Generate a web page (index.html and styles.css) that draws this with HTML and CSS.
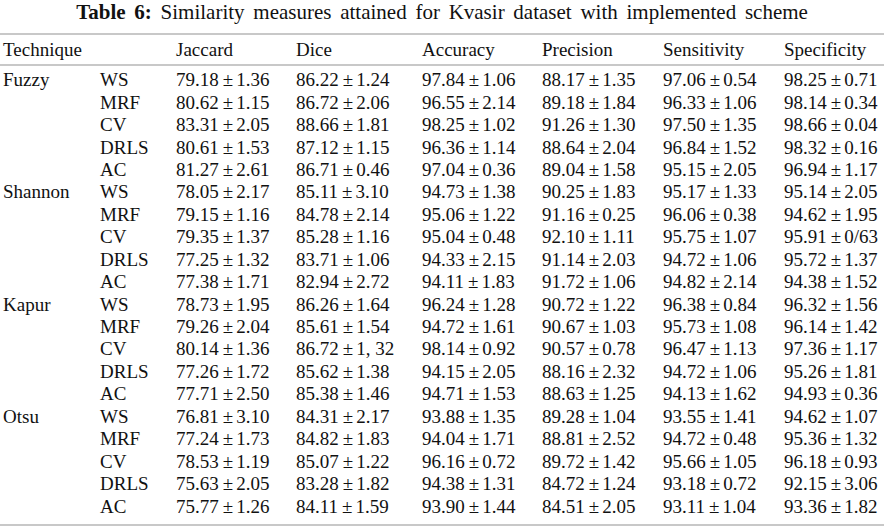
FILE: index.html
```html
<!DOCTYPE html>
<html>
<head>
<meta charset="utf-8">
<link rel="stylesheet" href="styles.css">
</head>
<body>
<div class="wrap">
<div class="title"><b>Table 6:</b> Similarity measures attained for Kvasir dataset with implemented scheme</div>
<table class="tbl">
<thead>
<tr><th>Technique</th><th></th><th>Jaccard</th><th>Dice</th><th>Accuracy</th><th>Precision</th><th>Sensitivity</th><th>Specificity</th></tr>
</thead>
<tbody>
<tr><td>Fuzzy</td><td>WS</td><td>79.18<span class="pm">±</span>1.36</td><td>86.22<span class="pm">±</span>1.24</td><td>97.84<span class="pm">±</span>1.06</td><td>88.17<span class="pm">±</span>1.35</td><td>97.06<span class="pm">±</span>0.54</td><td>98.25<span class="pm">±</span>0.71</td></tr>
<tr><td></td><td>MRF</td><td>80.62<span class="pm">±</span>1.15</td><td>86.72<span class="pm">±</span>2.06</td><td>96.55<span class="pm">±</span>2.14</td><td>89.18<span class="pm">±</span>1.84</td><td>96.33<span class="pm">±</span>1.06</td><td>98.14<span class="pm">±</span>0.34</td></tr>
<tr><td></td><td>CV</td><td>83.31<span class="pm">±</span>2.05</td><td>88.66<span class="pm">±</span>1.81</td><td>98.25<span class="pm">±</span>1.02</td><td>91.26<span class="pm">±</span>1.30</td><td>97.50<span class="pm">±</span>1.35</td><td>98.66<span class="pm">±</span>0.04</td></tr>
<tr><td></td><td>DRLS</td><td>80.61<span class="pm">±</span>1.53</td><td>87.12<span class="pm">±</span>1.15</td><td>96.36<span class="pm">±</span>1.14</td><td>88.64<span class="pm">±</span>2.04</td><td>96.84<span class="pm">±</span>1.52</td><td>98.32<span class="pm">±</span>0.16</td></tr>
<tr><td></td><td>AC</td><td>81.27<span class="pm">±</span>2.61</td><td>86.71<span class="pm">±</span>0.46</td><td>97.04<span class="pm">±</span>0.36</td><td>89.04<span class="pm">±</span>1.58</td><td>95.15<span class="pm">±</span>2.05</td><td>96.94<span class="pm">±</span>1.17</td></tr>
<tr><td>Shannon</td><td>WS</td><td>78.05<span class="pm">±</span>2.17</td><td>85.11<span class="pm">±</span>3.10</td><td>94.73<span class="pm">±</span>1.38</td><td>90.25<span class="pm">±</span>1.83</td><td>95.17<span class="pm">±</span>1.33</td><td>95.14<span class="pm">±</span>2.05</td></tr>
<tr><td></td><td>MRF</td><td>79.15<span class="pm">±</span>1.16</td><td>84.78<span class="pm">±</span>2.14</td><td>95.06<span class="pm">±</span>1.22</td><td>91.16<span class="pm">±</span>0.25</td><td>96.06<span class="pm">±</span>0.38</td><td>94.62<span class="pm">±</span>1.95</td></tr>
<tr><td></td><td>CV</td><td>79.35<span class="pm">±</span>1.37</td><td>85.28<span class="pm">±</span>1.16</td><td>95.04<span class="pm">±</span>0.48</td><td>92.10<span class="pm">±</span>1.11</td><td>95.75<span class="pm">±</span>1.07</td><td>95.91<span class="pm">±</span>0/63</td></tr>
<tr><td></td><td>DRLS</td><td>77.25<span class="pm">±</span>1.32</td><td>83.71<span class="pm">±</span>1.06</td><td>94.33<span class="pm">±</span>2.15</td><td>91.14<span class="pm">±</span>2.03</td><td>94.72<span class="pm">±</span>1.06</td><td>95.72<span class="pm">±</span>1.37</td></tr>
<tr><td></td><td>AC</td><td>77.38<span class="pm">±</span>1.71</td><td>82.94<span class="pm">±</span>2.72</td><td>94.11<span class="pm">±</span>1.83</td><td>91.72<span class="pm">±</span>1.06</td><td>94.82<span class="pm">±</span>2.14</td><td>94.38<span class="pm">±</span>1.52</td></tr>
<tr><td>Kapur</td><td>WS</td><td>78.73<span class="pm">±</span>1.95</td><td>86.26<span class="pm">±</span>1.64</td><td>96.24<span class="pm">±</span>1.28</td><td>90.72<span class="pm">±</span>1.22</td><td>96.38<span class="pm">±</span>0.84</td><td>96.32<span class="pm">±</span>1.56</td></tr>
<tr><td></td><td>MRF</td><td>79.26<span class="pm">±</span>2.04</td><td>85.61<span class="pm">±</span>1.54</td><td>94.72<span class="pm">±</span>1.61</td><td>90.67<span class="pm">±</span>1.03</td><td>95.73<span class="pm">±</span>1.08</td><td>96.14<span class="pm">±</span>1.42</td></tr>
<tr><td></td><td>CV</td><td>80.14<span class="pm">±</span>1.36</td><td>86.72<span class="pm">±</span>1, 32</td><td>98.14<span class="pm">±</span>0.92</td><td>90.57<span class="pm">±</span>0.78</td><td>96.47<span class="pm">±</span>1.13</td><td>97.36<span class="pm">±</span>1.17</td></tr>
<tr><td></td><td>DRLS</td><td>77.26<span class="pm">±</span>1.72</td><td>85.62<span class="pm">±</span>1.38</td><td>94.15<span class="pm">±</span>2.05</td><td>88.16<span class="pm">±</span>2.32</td><td>94.72<span class="pm">±</span>1.06</td><td>95.26<span class="pm">±</span>1.81</td></tr>
<tr><td></td><td>AC</td><td>77.71<span class="pm">±</span>2.50</td><td>85.38<span class="pm">±</span>1.46</td><td>94.71<span class="pm">±</span>1.53</td><td>88.63<span class="pm">±</span>1.25</td><td>94.13<span class="pm">±</span>1.62</td><td>94.93<span class="pm">±</span>0.36</td></tr>
<tr><td>Otsu</td><td>WS</td><td>76.81<span class="pm">±</span>3.10</td><td>84.31<span class="pm">±</span>2.17</td><td>93.88<span class="pm">±</span>1.35</td><td>89.28<span class="pm">±</span>1.04</td><td>93.55<span class="pm">±</span>1.41</td><td>94.62<span class="pm">±</span>1.07</td></tr>
<tr><td></td><td>MRF</td><td>77.24<span class="pm">±</span>1.73</td><td>84.82<span class="pm">±</span>1.83</td><td>94.04<span class="pm">±</span>1.71</td><td>88.81<span class="pm">±</span>2.52</td><td>94.72<span class="pm">±</span>0.48</td><td>95.36<span class="pm">±</span>1.32</td></tr>
<tr><td></td><td>CV</td><td>78.53<span class="pm">±</span>1.19</td><td>85.07<span class="pm">±</span>1.22</td><td>96.16<span class="pm">±</span>0.72</td><td>89.72<span class="pm">±</span>1.42</td><td>95.66<span class="pm">±</span>1.05</td><td>96.18<span class="pm">±</span>0.93</td></tr>
<tr><td></td><td>DRLS</td><td>75.63<span class="pm">±</span>2.05</td><td>83.28<span class="pm">±</span>1.82</td><td>94.38<span class="pm">±</span>1.31</td><td>84.72<span class="pm">±</span>1.24</td><td>93.18<span class="pm">±</span>0.72</td><td>92.15<span class="pm">±</span>3.06</td></tr>
<tr><td></td><td>AC</td><td>75.77<span class="pm">±</span>1.26</td><td>84.11<span class="pm">±</span>1.59</td><td>93.90<span class="pm">±</span>1.44</td><td>84.51<span class="pm">±</span>2.05</td><td>93.11<span class="pm">±</span>1.04</td><td>93.36<span class="pm">±</span>1.82</td></tr>
</tbody>
</table>
</div>
</body>
</html>
```
FILE: styles.css
```css
html, body {
  margin: 0;
  padding: 0;
  background: #fff;
}
body {
  font-family: "Liberation Serif", "Times New Roman", serif;
  color: #111;
  width: 884px;
  height: 528px;
  overflow: hidden;
}
.title {
  text-align: center;
  font-size: 21px;
  line-height: 24px;
  height: 33px;
  word-spacing: 3.5px;
}
.title b {
  font-weight: bold;
}
.tbl {
  width: 884px;
  border-collapse: collapse;
  table-layout: fixed;
  font-size: 19px;
}
.tbl th, .tbl td {
  text-align: left;
  font-weight: normal;
  padding: 0;
  white-space: nowrap;
}
.pm {
  padding: 0 3px 0 4px;
}
.tbl thead tr {
  border-top: 2px solid #c8c8c8;
  border-bottom: 2px solid #c8c8c8;
}
.tbl th {
  height: 29px;
}
.tbl td {
  height: 22.45px;
  line-height: 22px;
}
.tbl tbody tr:first-child td {
  padding-top: 3px;
}
.tbl tbody tr:last-child td {
  padding-bottom: 6px;
}
.tbl tbody tr:last-child {
  border-bottom: 2px solid #c8c8c8;
}
.tbl th:nth-child(1) { width: 97px; padding-left: 3px; }
.tbl td:nth-child(1) { padding-left: 3px; }
.tbl th:nth-child(2) { width: 76px; }
.tbl th:nth-child(3) { width: 120px; }
.tbl th:nth-child(4) { width: 126px; }
.tbl th:nth-child(5) { width: 120px; }
.tbl th:nth-child(6) { width: 121px; }
.tbl th:nth-child(7) { width: 121px; }
.tbl th:nth-child(8) { width: 100px; }
```
